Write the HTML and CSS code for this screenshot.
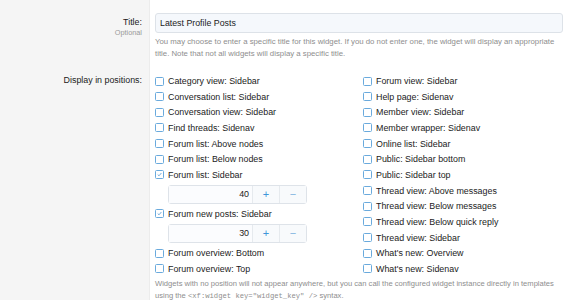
FILE: index.html
```html
<!DOCTYPE html>
<html>
<head>
<meta charset="utf-8">
<title>Widget options</title>
<link rel="stylesheet" href="styles.css">
</head>
<body>
<!--表单-->
<div class="form">
   <div class="label label-title">
       <span class="label-text">Title:</span>
       <span class="label-hint">Optional</span>
   </div>
   <div class="field field-title">
       <input class="input" type="text" value="Latest Profile Posts">
       <p class="explain">You may choose to enter a specific title for this widget. If you do not enter one, the widget will display an appropriate title. Note that not all widgets will display a specific title.</p>
   </div>

   <div class="label label-positions">
       <span class="label-text">Display in positions:</span>
   </div>
   <div class="field field-positions">
       <div class="columns">
           <ul class="choices">
               <li class="choice"><span class="box"></span>Category view: Sidebar</li>
               <li class="choice"><span class="box"></span>Conversation list: Sidebar</li>
               <li class="choice"><span class="box"></span>Conversation view: Sidebar</li>
               <li class="choice"><span class="box"></span>Find threads: Sidenav</li>
               <li class="choice"><span class="box"></span>Forum list: Above nodes</li>
               <li class="choice"><span class="box"></span>Forum list: Below nodes</li>
               <li class="choice"><span class="box checked"><svg viewBox="0 0 9 9"><path d="M2.2 4.6 L3.9 6.2 L6.9 2.6"/></svg></span>Forum list: Sidebar</li>
               <li class="spin">
                   <span class="spin-num">40</span>
                   <span class="spin-btn plus">+</span>
                   <span class="spin-btn minus">&minus;</span>
               </li>
               <li class="choice"><span class="box checked"><svg viewBox="0 0 9 9"><path d="M2.2 4.6 L3.9 6.2 L6.9 2.6"/></svg></span>Forum new posts: Sidebar</li>
               <li class="spin">
                   <span class="spin-num">30</span>
                   <span class="spin-btn plus">+</span>
                   <span class="spin-btn minus">&minus;</span>
               </li>
               <li class="choice"><span class="box"></span>Forum overview: Bottom</li>
               <li class="choice"><span class="box"></span>Forum overview: Top</li>
           </ul>
           <ul class="choices">
               <li class="choice"><span class="box"></span>Forum view: Sidebar</li>
               <li class="choice"><span class="box"></span>Help page: Sidenav</li>
               <li class="choice"><span class="box"></span>Member view: Sidebar</li>
               <li class="choice"><span class="box"></span>Member wrapper: Sidenav</li>
               <li class="choice"><span class="box"></span>Online list: Sidebar</li>
               <li class="choice"><span class="box"></span>Public: Sidebar bottom</li>
               <li class="choice"><span class="box"></span>Public: Sidebar top</li>
               <li class="choice"><span class="box"></span>Thread view: Above messages</li>
               <li class="choice"><span class="box"></span>Thread view: Below messages</li>
               <li class="choice"><span class="box"></span>Thread view: Below quick reply</li>
               <li class="choice"><span class="box"></span>Thread view: Sidebar</li>
               <li class="choice"><span class="box"></span>What's new: Overview</li>
               <li class="choice"><span class="box"></span>What's new: Sidenav</li>
           </ul>
       </div>
       <p class="explain explain-foot">Widgets with no position will not appear anywhere, but you can call the configured widget instance directly in templates using the <code>&lt;xf:widget key="widget_key" /&gt;</code> syntax.</p>
   </div>
</div>
</body>
</html>
```

FILE: styles.css
```css
/*清除默认样式*/
body,div,ul,p,li{padding:0; margin:0;}
li{list-style:none;}
body{font-family:"Liberation Sans", Arial, sans-serif; font-size:8.9px; color:#1b1b1b; background:#fff;}

/*表单*/
.form{display:grid; grid-template-columns:150px 1fr; grid-template-rows:auto 1fr; min-height:300px;}
.label{background:#f5f5f5; border-right:1px solid #ececec; text-align:right; padding-right:7px;}
.label-text{display:block; line-height:11px;}
.label-hint{display:block; font-size:7.3px; line-height:10px; color:#9a9a9a;}
.label-title{padding-top:17px;}
.label-positions{padding-top:14.2px;}
.label-positions .label-text{line-height:15.67px;}

.field{padding:0 2px 0 5px;}
.field-title{padding-top:13px;}
.field-positions{padding-top:14.2px; padding-right:1px;}

.input{display:block; box-sizing:border-box; width:100%; height:20px; margin:0; padding:0 4px; border:1px solid #dde2e8; border-radius:3px; background:#f5f8fc; font-family:inherit; font-size:8.8px; color:#1b1b1b;}
.explain{font-size:7.8px; line-height:11.5px; color:#8e8e8e; margin-top:3px;}
.explain code{font-family:"Liberation Mono", "Courier New", monospace; font-size:7.2px; line-height:10px;}
.explain-foot{margin-top:1.5px; line-height:12px; font-size:7.6px;}

/*选项*/
.columns{display:grid; grid-template-columns:208px 1fr;}
.choice{display:flex; align-items:center; height:15.67px; white-space:nowrap;}
.box{display:inline-block; box-sizing:border-box; width:9px; height:9px; margin-right:4px; border:1px solid #6aaadd; border-radius:1.5px; background:#fff; flex-shrink:0;}
.box svg{display:block; width:7px; height:7px;}
.box svg path{fill:none; stroke:#5d9fd6; stroke-width:1.1;}

/*数字框*/
.spin{display:flex; box-sizing:border-box; width:139px; height:19px; margin:2.2px 0 2.2px 13px; border:1px solid #dee3e9; border-radius:3px; background:#fff;}
.spin-num{flex:1; text-align:right; padding-right:3px; line-height:17px; background:#fbfcfe;}
.spin-btn{width:26px; text-align:center; line-height:16px; border-left:1px solid #e6eaee; background:#f8fafc; color:#3f95da; font-size:11px;}
.spin-btn.minus{color:#7fb4e0;}
```
